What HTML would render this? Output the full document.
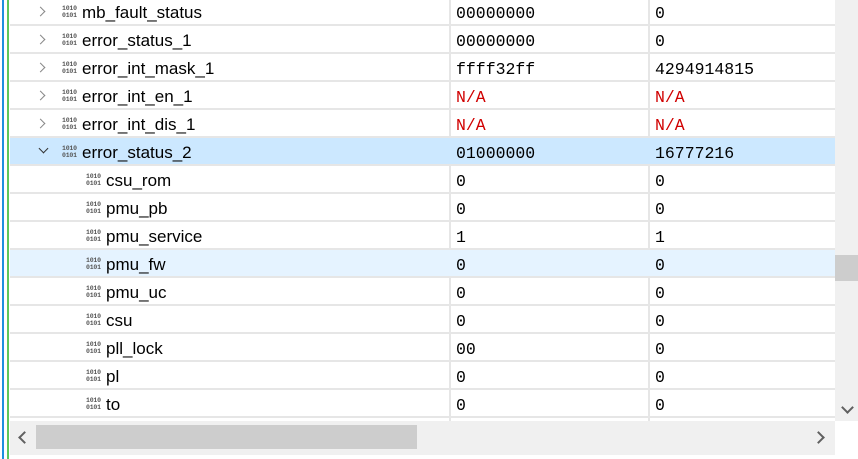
<!DOCTYPE html><html><head><style>
body{margin:0;width:858px;height:459px;background:#fff;position:relative;overflow:hidden;font-family:"Liberation Sans",sans-serif}
.r{position:absolute;left:10px;width:825px;height:28px;border-bottom:2px solid #e6e6e6;box-sizing:border-box}
.r span{position:absolute;top:5px;font-size:17px;color:#000;white-space:nowrap}
.m{font-family:"Liberation Mono",monospace;font-size:16.5px!important;top:6px!important}
.na{color:#d00000!important}
.ic{position:absolute;top:8px;font-family:"Liberation Mono",monospace;font-size:6.5px;line-height:6.5px;color:#555;font-weight:bold;letter-spacing:-0.2px}
.ch{position:absolute;top:6px;width:6px;height:6px;border-right:1.6px solid #888;border-bottom:1.6px solid #888}
.vd{position:absolute;top:0;width:2px;height:421px;background:#e6e6e6}
</style></head><body>
<div style="position:absolute;left:2px;top:0;width:2px;height:459px;background:#1e90e0"></div>
<div style="position:absolute;left:7px;top:0;width:2px;height:459px;background:#5cc85c"></div>
<div class="vd" style="left:449px"></div><div class="vd" style="left:648px"></div>
<div id="rows"></div>
<div style="position:absolute;left:835px;top:0;width:23px;height:421px;background:#f0f0f0"></div>
<div style="position:absolute;left:835px;top:255px;width:23px;height:26px;background:#cdcdcd"></div>
<div style="position:absolute;left:843px;top:403px;width:7px;height:7px;border-right:2px solid #606060;border-bottom:2px solid #606060;transform:rotate(45deg)"></div>
<div style="position:absolute;left:10px;top:421px;width:825px;height:34px;background:#f0f0f0"></div>
<div style="position:absolute;left:36px;top:425px;width:381px;height:24px;background:#cdcdcd"></div>
<div style="position:absolute;left:20px;top:433px;width:7px;height:7px;border-left:2px solid #606060;border-bottom:2px solid #606060;transform:rotate(45deg)"></div>
<div style="position:absolute;left:814px;top:433px;width:7px;height:7px;border-right:2px solid #606060;border-top:2px solid #606060;transform:rotate(45deg)"></div>
<script>
var d=[["mb_fault_status","00000000","0",0],["error_status_1","00000000","0",0],["error_int_mask_1","ffff32ff","4294914815",0],["error_int_en_1","N/A","N/A",0],["error_int_dis_1","N/A","N/A",0],["error_status_2","01000000","16777216",2],["csu_rom","0","0",1],["pmu_pb","0","0",1],["pmu_service","1","1",1],["pmu_fw","0","0",1],["pmu_uc","0","0",1],["csu","0","0",1],["pll_lock","00","0",1],["pl","0","0",1],["to","0","0",1]];
var h="";d.forEach(function(r,i){var t=-2+28*i;var bg=i==5?"#cce8ff":(i==9?"#e5f3ff":"transparent");
var ch=r[3]==1?"":(r[3]==2?'<div class="ch" style="left:30px;transform:rotate(45deg);top:7px;border-color:#333"></div>':'<div class="ch" style="left:27px;transform:rotate(-45deg);top:10px"></div>');
var ix=r[3]==1?76:52;var na=r[1]=="N/A"?" na":"";
h+='<div class="r" style="top:'+t+'px;background:'+bg+'">'+ch+'<div class="ic" style="left:'+ix+'px">1010<br>0101</div><span style="left:'+(ix+20)+'px">'+r[0]+'</span><span class="m'+na+'" style="left:446px">'+r[1]+'</span><span class="m'+na+'" style="left:645px">'+r[2]+'</span></div>';});
document.getElementById("rows").innerHTML=h;
</script>
</body></html>
